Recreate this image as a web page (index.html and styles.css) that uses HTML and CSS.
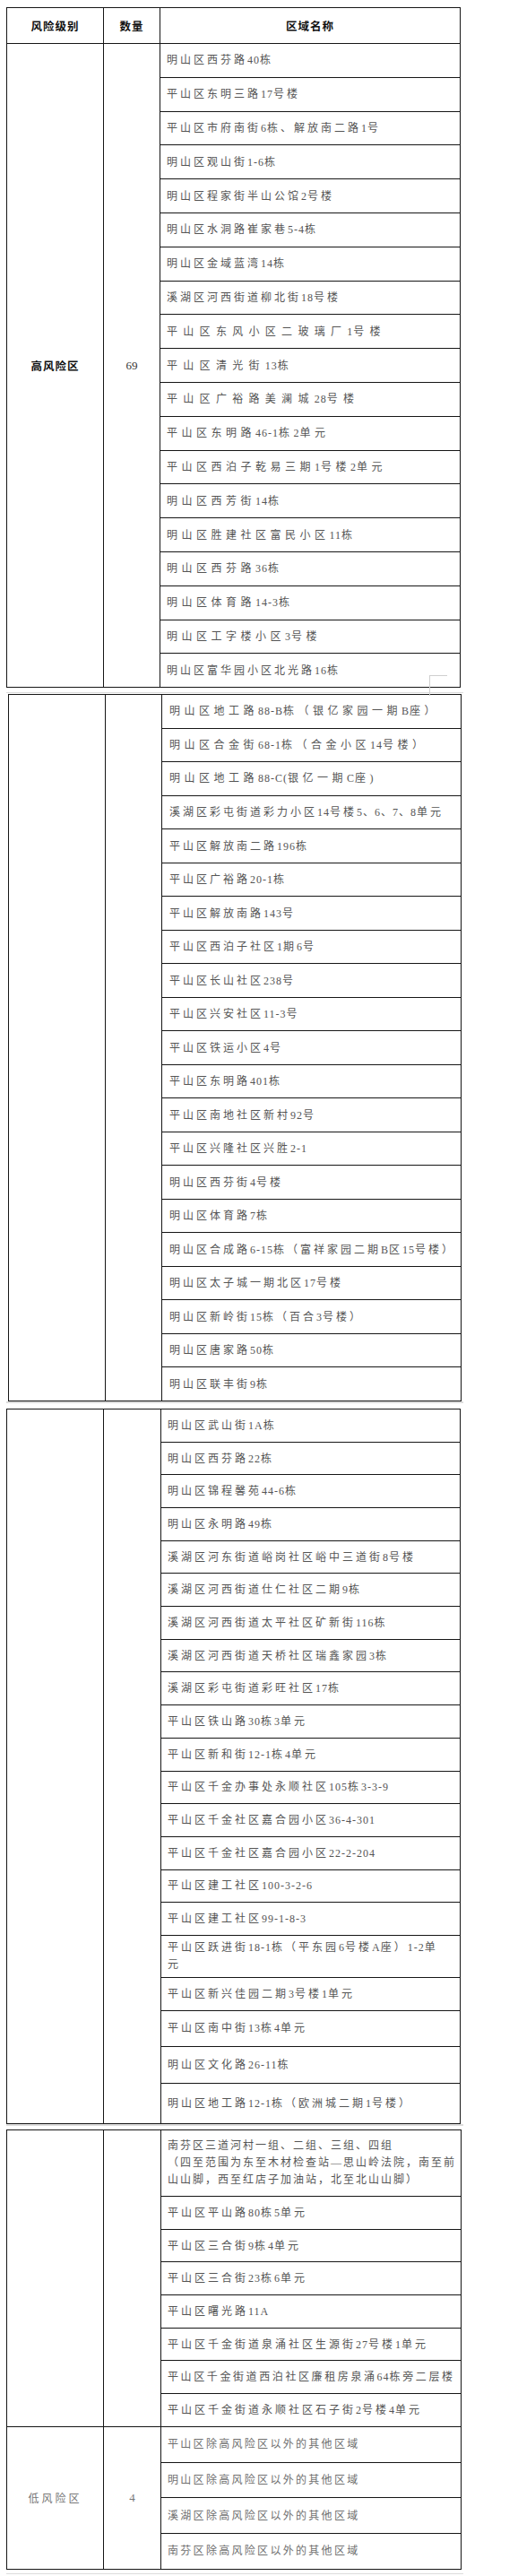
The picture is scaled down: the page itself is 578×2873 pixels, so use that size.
FILE: index.html
```html
<!DOCTYPE html>
<html lang="zh-CN">
<head>
<meta charset="utf-8">
<title>风险区域</title>
<link rel="stylesheet" href="styles.css">
</head>
<body>
<main class="doc">
  <section class="sheet s1">
    <div class="hd">风险级别</div>
    <div class="hd">数量</div>
    <div class="hd">区域名称</div>
    <div class="lvl hi span19">高风险区</div>
    <div class="qty span19">69</div>
    <div class="c">明山区西芬路<span class="n">40</span>栋</div>
    <div class="c">平山区东明三路<span class="n">17</span>号楼</div>
    <div class="c">平山区市府南街<span class="n">6</span>栋、解放南二路<span class="n">1</span>号</div>
    <div class="c">明山区观山街<span class="n">1-6</span>栋</div>
    <div class="c">明山区程家街半山公馆<span class="n">2</span>号楼</div>
    <div class="c">明山区水洞路崔家巷<span class="n">5-4</span>栋</div>
    <div class="c">明山区金域蓝湾<span class="n">14</span>栋</div>
    <div class="c">溪湖区河西街道柳北街<span class="n">18</span>号楼</div>
    <div class="c w">平山区东风小区二玻璃厂<span class="n">1</span>号楼</div>
    <div class="c w">平山区清光街<span class="n">13</span>栋</div>
    <div class="c w">平山区广裕路美澜城<span class="n">28</span>号楼</div>
    <div class="c m">平山区东明路<span class="n">46-1</span>栋<span class="n">2</span>单元</div>
    <div class="c m">平山区西泊子乾易三期<span class="n">1</span>号楼<span class="n">2</span>单元</div>
    <div class="c m">明山区西芳街<span class="n">14</span>栋</div>
    <div class="c m">明山区胜建社区富民小区<span class="n">11</span>栋</div>
    <div class="c m">明山区西芬路<span class="n">36</span>栋</div>
    <div class="c m">明山区体育路<span class="n">14-3</span>栋</div>
    <div class="c m">明山区工字楼小区<span class="n">3</span>号楼</div>
    <div class="c">明山区富华园小区北光路<span class="n">16</span>栋</div>
  </section>
  <div class="seam seam1"></div>
  <section class="sheet s2">
    <div class="lvl span21"></div>
    <div class="qty span21"></div>
    <div class="c m">明山区地工路<span class="n">88-B</span>栋（银亿家园一期<span class="n">B</span>座）</div>
    <div class="c m">明山区合金街<span class="n">68-1</span>栋（合金小区<span class="n">14</span>号楼）</div>
    <div class="c m">明山区地工路<span class="n">88-C(</span>银亿一期<span class="n">C</span>座)</div>
    <div class="c">溪湖区彩屯街道彩力小区<span class="n">14</span>号楼<span class="n">5、6、7、8</span>单元</div>
    <div class="c">平山区解放南二路<span class="n">196</span>栋</div>
    <div class="c">平山区广裕路<span class="n">20-1</span>栋</div>
    <div class="c">平山区解放南路<span class="n">143</span>号</div>
    <div class="c">平山区西泊子社区<span class="n">1</span>期<span class="n">6</span>号</div>
    <div class="c">平山区长山社区<span class="n">238</span>号</div>
    <div class="c">平山区兴安社区<span class="n">11-3</span>号</div>
    <div class="c">平山区铁运小区<span class="n">4</span>号</div>
    <div class="c">平山区东明路<span class="n">401</span>栋</div>
    <div class="c">平山区南地社区新村<span class="n">92</span>号</div>
    <div class="c">平山区兴隆社区兴胜<span class="n">2-1</span></div>
    <div class="c">明山区西芬街<span class="n">4</span>号楼</div>
    <div class="c">明山区体育路<span class="n">7</span>栋</div>
    <div class="c">明山区合成路<span class="n">6-15</span>栋（富祥家园二期<span class="n">B</span>区<span class="n">15</span>号楼）</div>
    <div class="c">明山区太子城一期北区<span class="n">17</span>号楼</div>
    <div class="c">明山区新岭街<span class="n">15</span>栋（百合<span class="n">3</span>号楼）</div>
    <div class="c">明山区唐家路<span class="n">50</span>栋</div>
    <div class="c">明山区联丰街<span class="n">9</span>栋</div>
  </section>
  <div class="seam seam2"></div>
  <section class="sheet s3">
    <div class="lvl span21"></div>
    <div class="qty span21"></div>
    <div class="c">明山区武山街<span class="n">1A</span>栋</div>
    <div class="c">明山区西芬路<span class="n">22</span>栋</div>
    <div class="c">明山区锦程馨苑<span class="n">44-6</span>栋</div>
    <div class="c">明山区永明路<span class="n">49</span>栋</div>
    <div class="c">溪湖区河东街道峪岗社区峪中三道街<span class="n">8</span>号楼</div>
    <div class="c">溪湖区河西街道仕仁社区二期<span class="n">9</span>栋</div>
    <div class="c">溪湖区河西街道太平社区矿新街<span class="n">116</span>栋</div>
    <div class="c">溪湖区河西街道天桥社区瑞鑫家园<span class="n">3</span>栋</div>
    <div class="c">溪湖区彩屯街道彩旺社区<span class="n">17</span>栋</div>
    <div class="c">平山区铁山路<span class="n">30</span>栋<span class="n">3</span>单元</div>
    <div class="c">平山区新和街<span class="n">12-1</span>栋<span class="n">4</span>单元</div>
    <div class="c">平山区千金办事处永顺社区<span class="n">105</span>栋<span class="n">3-3-9</span></div>
    <div class="c">平山区千金社区嘉合园小区<span class="n">36-4-301</span></div>
    <div class="c">平山区千金社区嘉合园小区<span class="n">22-2-204</span></div>
    <div class="c">平山区建工社区<span class="n">100-3-2-6</span></div>
    <div class="c">平山区建工社区<span class="n">99-1-8-3</span></div>
    <div class="c h47">平山区跃进街<span class="n">18-1</span>栋（平东园<span class="n">6</span>号楼<span class="n">A</span>座）<span class="n">1-2</span>单<br>元</div>
    <div class="c h37">平山区新兴佳园二期<span class="n">3</span>号楼<span class="n">1</span>单元</div>
    <div class="c h40">平山区南中街<span class="n">13</span>栋<span class="n">4</span>单元</div>
    <div class="c h41">明山区文化路<span class="n">26-11</span>栋</div>
    <div class="c h45">明山区地工路<span class="n">12-1</span>栋（欧洲城二期<span class="n">1</span>号楼）</div>
  </section>
  <div class="seam seam3"></div>
  <section class="sheet s4">
    <div class="lvl span8"></div>
    <div class="qty span8"></div>
    <div class="c tt h74">南芬区三道河村一组、二组、三组、四组<br>（四至范围为东至木材检查站—思山岭法院，南至前<br>山山脚，西至红店子加油站，北至北山山脚）</div>
    <div class="c">平山区平山路<span class="n">80</span>栋<span class="n">5</span>单元</div>
    <div class="c">平山区三合街<span class="n">9</span>栋<span class="n">4</span>单元</div>
    <div class="c">平山区三合街<span class="n">23</span>栋<span class="n">6</span>单元</div>
    <div class="c">平山区曙光路<span class="n">11A</span></div>
    <div class="c">平山区千金街道泉涌社区生源街<span class="n">27</span>号楼<span class="n">1</span>单元</div>
    <div class="c k">平山区千金街道西泊社区廉租房泉涌<span class="n">64</span>栋旁二层楼</div>
    <div class="c">平山区千金街道永顺社区石子街<span class="n">2</span>号楼<span class="n">4</span>单元</div>
    <div class="lvl lo span4">低风险区</div>
    <div class="qty lo span4">4</div>
    <div class="c t low">平山区除高风险区以外的其他区域</div>
    <div class="c t low">明山区除高风险区以外的其他区域</div>
    <div class="c t low">溪湖区除高风险区以外的其他区域</div>
    <div class="c t low">南芬区除高风险区以外的其他区域</div>
  </section>
  <div class="seam seam4"></div>
</main>
</body>
</html>
```

FILE: styles.css
```css
* { box-sizing: border-box; }

body {
  margin: 0;
  background: #fff;
  color: #555;
  font-family: "Liberation Serif", "Noto Sans CJK SC", serif;
}

.doc {
  width: 578px;
  padding: 8px 0 0 7px;
}

.sheet {
  display: grid;
  grid-template-columns: 108px 63px 335px;
  width: 507px;
  border-top: 1px solid #161616;
  border-left: 1px solid #161616;
}

.sheet > div {
  border-right: 1px solid #161616;
  border-bottom: 1px solid #161616;
}

/* faint crop mark left by the scan, lying over the sheet edge */
.s1 {
  position: relative;
}

.s1::after {
  content: "";
  position: absolute;
  left: 471px;
  top: 744px;
  width: 19px;
  height: 22px;
  border-left: 1px solid #cfcfcf;
  border-top: 1px solid #cfcfcf;
}

.s2 {
  margin-left: 2px;
  grid-template-columns: 108px 63px 334px;
  width: 506px;
}

.s3 {
  grid-template-columns: 108px 64px 334px;
}

.s4 {
  grid-template-columns: 108px 64px 335px;
  width: 508px;
}

.hd,
.lvl,
.qty {
  display: flex;
  align-items: center;
  justify-content: center;
}

.hd {
  height: 40px;
  color: #111;
  font-weight: 700;
  font-size: 12.5px;
  letter-spacing: 1px;
}

.lvl {
  font-size: 12.5px;
  letter-spacing: 1px;
}

.lvl.hi {
  color: #111;
  font-weight: 700;
}

.qty {
  font-size: 13px;
  color: #333;
}

.lvl.lo {
  color: #777;
  letter-spacing: 3px;
  font-size: 12px;
}

.qty.lo {
  color: #777;
}

.span19 { grid-row: span 19; }
.span21 { grid-row: span 21; }
.span8 { grid-row: span 8; }
.span4 { grid-row: span 4; }

.c {
  display: block;
  height: 37.8px;
  padding: 9.4px 0 0 7px;
  font-size: 12px;
  line-height: 19px;
  letter-spacing: 3px;
  white-space: nowrap;
}

.s2 .c { height: 37.52px; padding: 9.3px 0 0 8px; }
.s3 .c { height: 36.7px; padding: 8.9px 0 0 7px; }
.s4 .c { height: 36.7px; padding: 8.9px 0 0 7px; }

.n { letter-spacing: 1px; }

.c.m { letter-spacing: 4.5px; }
.c.w { letter-spacing: 6.3px; }
.c.t { letter-spacing: 2.3px; }
.c.tt { letter-spacing: 2px; }
.c.k { letter-spacing: 2.6px; }

.s3 .c.h47 { height: 47px; padding-top: 4.5px; }
.s3 .c.h37 { height: 37px; padding-top: 9px; }
.s3 .c.h40 { height: 40px; padding-top: 10.5px; }
.s3 .c.h41 { height: 41px; padding-top: 11px; }
.s3 .c.h45 { height: 45px; padding-top: 13px; }
.s4 .c.h74 { height: 74px; padding-top: 8.5px; }
.s4 .c.low { height: 39.75px; padding-top: 10.4px; color: #707070; }

.seam {
  height: 1px;
  width: 510px;
  background: #dcdcdc;
}

.seam1 { margin: 5px 0 1px; }
.seam2 { height: 2px; margin: 0 0 6px; }
.seam3 { height: 2px; margin: 0 0 4px; }
.seam4 { margin-top: 4px; }
```
